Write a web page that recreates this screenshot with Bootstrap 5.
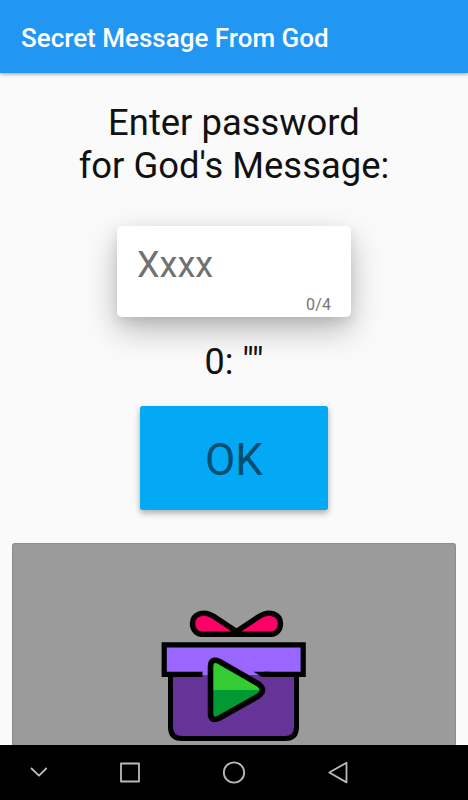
<!DOCTYPE html>
<html lang="en">
<head>
<meta charset="utf-8">
<meta name="viewport" content="width=device-width, initial-scale=1">
<title>Secret Message From God</title>
<link rel="stylesheet" href="https://cdn.jsdelivr.net/npm/bootstrap@5.3.0/dist/css/bootstrap.min.css">
<style>
body { font-family: Roboto, sans-serif; background: #fafafa; color: #111; }
.screen { height: 800px; }
.app-bar { height: 72.5px; padding: 3px 21px 0; background: #2196f3; box-shadow: 0 1px 4px rgba(0,0,0,.38); }
.app-title { font-size: 26px; font-weight: 500; line-height: 30px; }
.app-title span, .prompt span, .echo span, .ok-btn span, .counter span { display: inline-block; white-space: nowrap; }
.prompt { font-size: 36.4px; line-height: 43px; margin-top: 28px; font-weight: 400; }
.pass-card { width: 234px; height: 91px; margin-top: 39.5px; border-radius: 5px; padding: 0 20px; box-shadow: 0 13px 32px rgba(0,0,0,.26), 0 5px 12px rgba(0,0,0,.09); }
.pass-input { height: 46px; margin-top: 16px; font-size: 36px; line-height: 46px; color: #111; }
.pass-input::placeholder { color: #717171; opacity: 1; }
.counter { font-size: 16px; line-height: 18px; margin-top: 8px; color: #757575; letter-spacing: .1px; }
.echo { font-size: 36px; line-height: 43px; margin-top: 24px; }
.ok-btn { width: 188.5px; height: 104px; margin-top: 22px; padding-top: 3px !important; background: #03a9f4; border-radius: 2.5px; font-size: 44px; color: #024e70; box-shadow: 0 3px 6px rgba(0,0,0,.32); }
.gift-panel { width: 444.5px; margin-top: 32.5px; background: #9b9b9b; border: 1px solid #8c8c8c; border-bottom: 0; border-radius: 3px 3px 0 0; padding-top: 66px; }
.nav-keys { height: 55.5px; background: #000; }
</style>
<script src="https://cdn.jsdelivr.net/npm/bootstrap@5.3.0/dist/js/bootstrap.bundle.min.js" defer></script>
</head>
<body>
<div class="screen d-flex flex-column overflow-hidden">
  <header class="app-bar d-flex align-items-center flex-shrink-0 text-white">
    <h1 class="app-title m-0"><span>Secret Message From God</span></h1>
  </header>
  <main class="flex-grow-1 d-flex flex-column align-items-center overflow-hidden">
    <h2 class="prompt mb-0 text-center flex-shrink-0"><span>Enter password</span><br><span>for God's Message:</span></h2>
    <div class="pass-card bg-white d-flex flex-column flex-shrink-0">
      <input class="pass-input form-control border-0 p-0 bg-transparent shadow-none" type="text" maxlength="4" placeholder="Xxxx" aria-label="Password">
      <div class="counter text-end"><span>0/4</span></div>
    </div>
    <div class="echo flex-shrink-0 position-relative"><span>0: ""</span></div>
    <button class="ok-btn btn border-0 p-0 flex-shrink-0" type="button"><span>OK</span></button>
    <div class="gift-panel flex-grow-1 flex-shrink-0 d-flex justify-content-center align-items-start">
      <svg width="146" height="134" viewBox="161 610 146 134" stroke="#000" stroke-linejoin="round" stroke-linecap="round" aria-label="Gift">
        <path d="M236.500 631.500 L214 616.500 C203 609.500 192.500 614.500 192.500 623.500 C192.500 629.500 196.500 634.200 202 634.200 H271 C276.500 634.200 280.500 629.500 280.500 623.500 C280.500 614.500 270 609.500 259 616.500 Z" fill="#ff0066" stroke-width="5.400"/>
        <path d="M170.500 675 V727 Q170.500 738.500 182 738.500 H285 Q296.500 738.500 296.500 727 V675 Z" fill="#663399" stroke="none"/>
        <path d="M170.500 675 V727 Q170.500 738.500 182 738.500 H285 Q296.500 738.500 296.500 727 V675" fill="none" stroke-width="5"/>
        <path d="M164.200 644.800 H303.800 V674.800 H164.200 Z" fill="#9966ff" stroke="none"/>
        <path d="M202.500 674.300 H164.200 V644.800 H303.200 V674.300 H264" fill="none" stroke-width="5.200" stroke-linejoin="miter" stroke-linecap="butt"/>
        <path d="M253.500 671.700 L262 676.900 H270 V671.700 Z" fill="#000" stroke="none"/>
        <path d="M210.500 667 Q210.500 657.500 219.500 661.500 L258.500 684 Q267 690 258.500 696 L219.500 718 Q210.500 722.500 210.500 713 Z" fill="#33cc33" stroke="none"/>
        <path d="M210.500 690 H263 Q263 693 258.500 696 L219.500 718 Q210.500 722.500 210.500 713 Z" fill="#009933" stroke="none"/>
        <path d="M210.500 667 Q210.500 657.500 219.500 661.500 L258.500 684 Q266.500 690 258.500 696 L219.500 718 Q210.500 722.500 210.500 713 Z" fill="none" stroke-width="5.600"/>
      </svg>
    </div>
  </main>
  <nav class="nav-keys flex-shrink-0" aria-label="System navigation">
    <svg class="d-block" width="468" height="55.5" viewBox="0 744.500 468 55.500" fill="none" stroke="#bababa" stroke-width="1.800" stroke-linejoin="round">
      <path d="M31 767.500 L39 775.200 L46.700 767.500"/>
      <rect x="121" y="763" width="18" height="18"/>
      <circle cx="234" cy="772" r="10.200"/>
      <path d="M346.500 762.200 V781.900 L329.300 772 Z"/>
    </svg>
  </nav>
</div>
</body>
</html>
